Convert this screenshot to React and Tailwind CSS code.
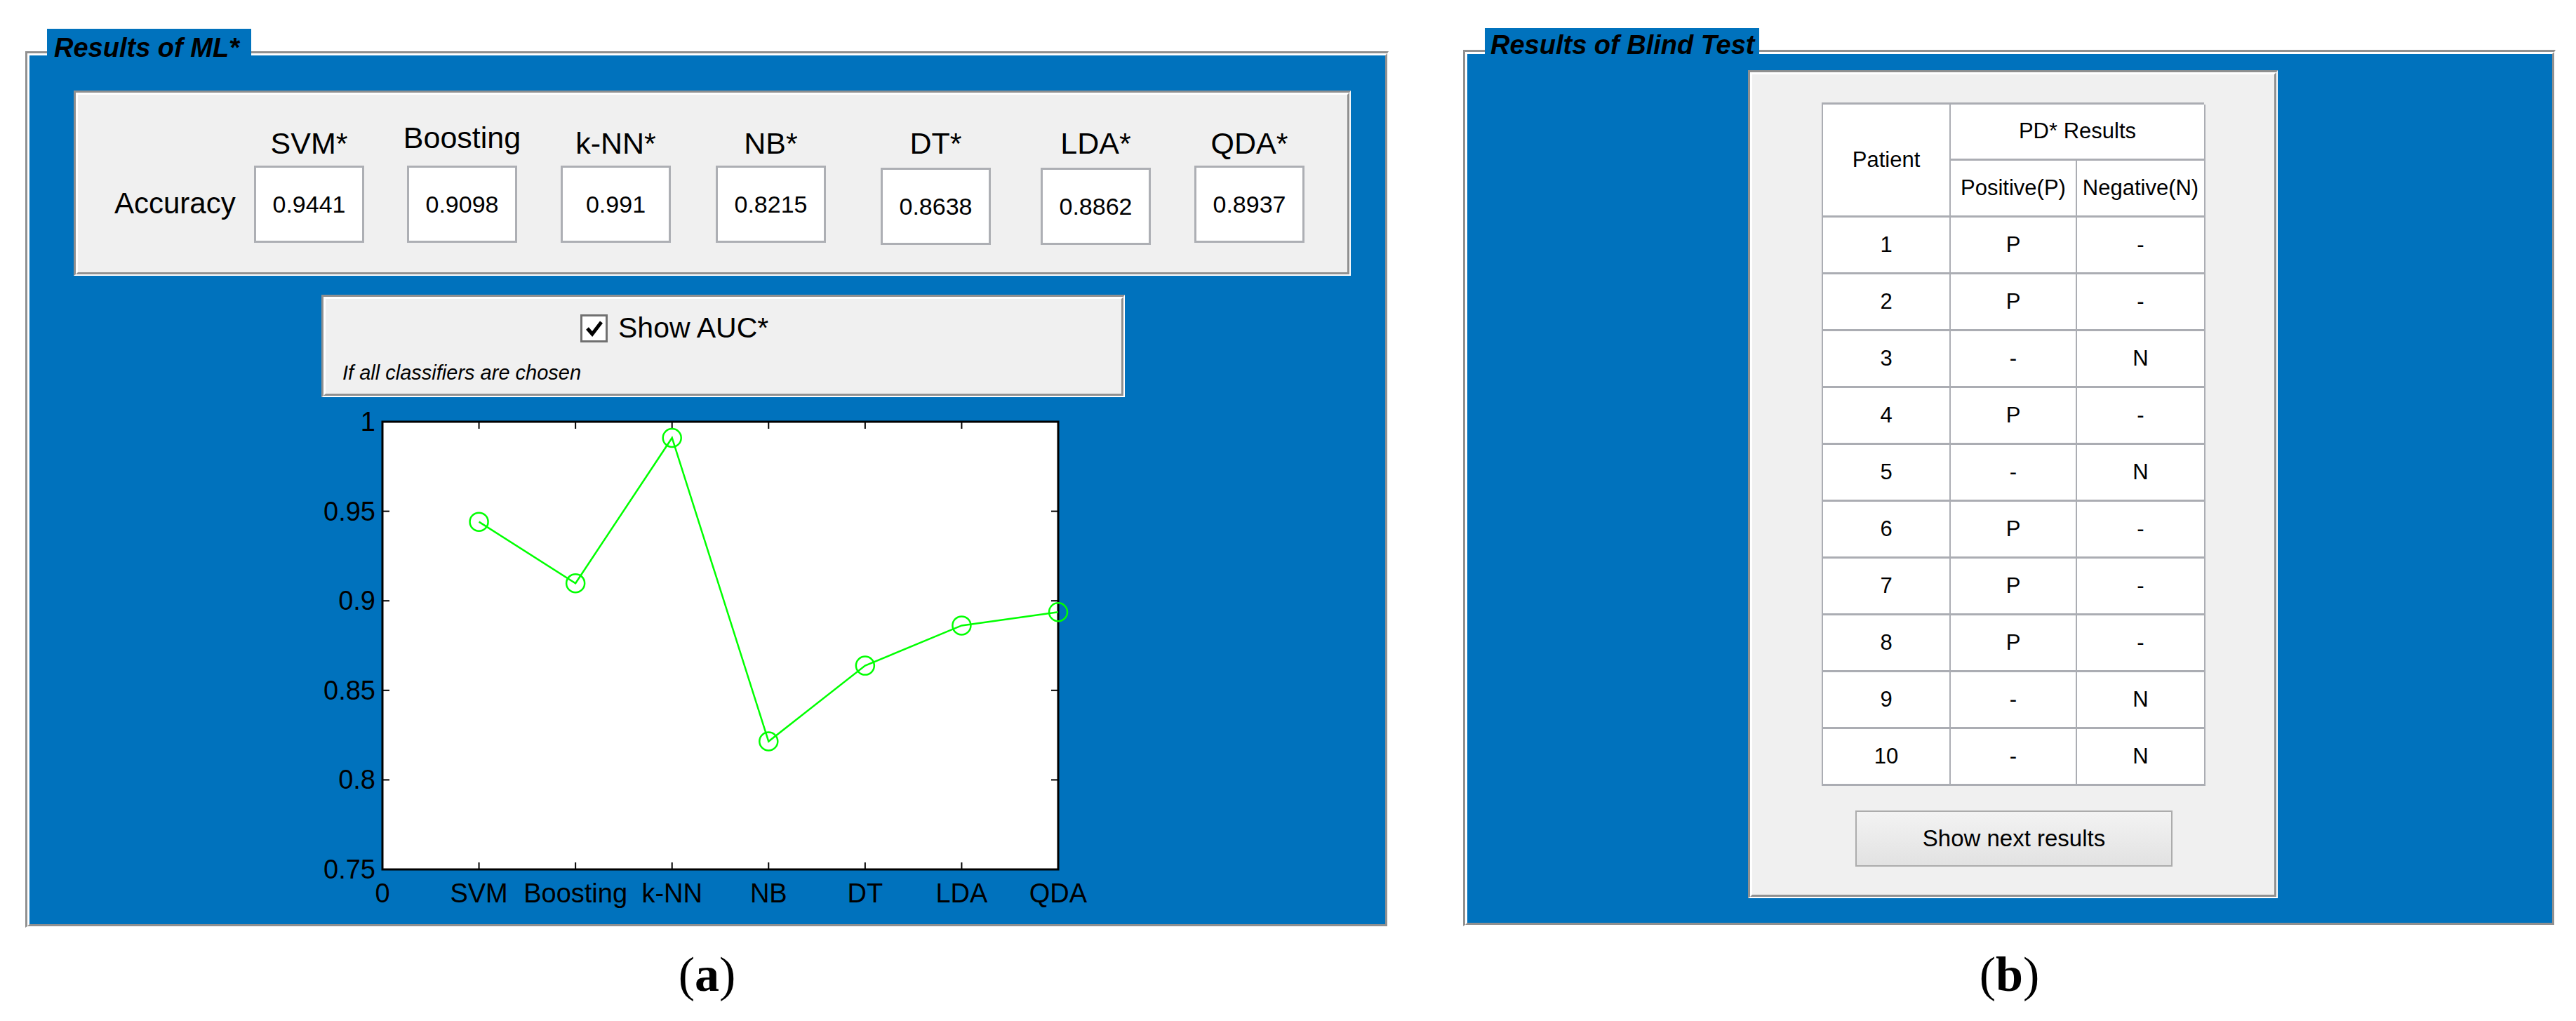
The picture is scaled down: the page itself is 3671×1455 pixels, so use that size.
import React from 'react';

const BLUE = 'bg-[#0072BD]';

const classifiers = [
  { label: 'SVM*', value: '0.9441', ml: 'ml-0' },
  { label: 'Boosting', value: '0.9098', ml: 'ml-[61px]', raise: true },
  { label: 'k-NN*', value: '0.991', ml: 'ml-[62px]' },
  { label: 'NB*', value: '0.8215', ml: 'ml-[64px]' },
  { label: 'DT*', value: '0.8638', ml: 'ml-[78px]', low: true },
  { label: 'LDA*', value: '0.8862', ml: 'ml-[71px]', low: true },
  { label: 'QDA*', value: '0.8937', ml: 'ml-[62px]' },
];

const blind = [
  ['1', 'P', '-'],
  ['2', 'P', '-'],
  ['3', '-', 'N'],
  ['4', 'P', '-'],
  ['5', '-', 'N'],
  ['6', 'P', '-'],
  ['7', 'P', '-'],
  ['8', 'P', '-'],
  ['9', '-', 'N'],
  ['10', '-', 'N'],
];

const auc = [0.9441, 0.9098, 0.991, 0.8215, 0.8638, 0.8862, 0.8937];
const xTicks = ['0', 'SVM', 'Boosting', 'k-NN', 'NB', 'DT', 'LDA', 'QDA'];
const yTicks = [1, 0.95, 0.9, 0.85, 0.8, 0.75];

// etched-in border, the way a matlab uipanel draws it
function Etched({ className = '', innerClassName = '', children }) {
  return (
    <div className={`border-t-[3px] border-l-[3px] border-r-2 border-b-2 border-t-[#909090] border-l-[#909090] border-r-white border-b-white ${className}`}>
      <div className={`h-full border-[3px] border-t-white border-l-white border-r-[#909090] border-b-[#909090] ${innerClassName}`}>
        {children}
      </div>
    </div>
  );
}

function Chart() {
  const left = 545, right = 1508, top = 601, bottom = 1239;
  const x = (i) => left + (i * (right - left)) / 7;
  const y = (v) => bottom - ((v - 0.75) / 0.25) * (bottom - top);
  const pts = auc.map((v, i) => `${x(i + 1)},${y(v)}`).join(' ');

  return (
    <svg width="1160" height="725" viewBox="440 575 1160 725" className="block">
      <rect x={left} y={top} width={right - left} height={bottom - top} fill="#fff" stroke="#000" strokeWidth="3" />
      {xTicks.map((t, i) => (
        <g key={t}>
          {i > 0 && i < 7 && (
            <>
              <line x1={x(i)} y1={top} x2={x(i)} y2={top + 10} stroke="#000" strokeWidth="2" />
              <line x1={x(i)} y1={bottom} x2={x(i)} y2={bottom - 10} stroke="#000" strokeWidth="2" />
            </>
          )}
          <text x={x(i)} y={1286} textAnchor="middle" fontSize="38" fontFamily="Liberation Sans, Arial, sans-serif">
            {t}
          </text>
        </g>
      ))}
      {yTicks.map((v) => (
        <g key={v}>
          {v < 1 && v > 0.75 && (
            <>
              <line x1={left} y1={y(v)} x2={left + 10} y2={y(v)} stroke="#000" strokeWidth="2" />
              <line x1={right} y1={y(v)} x2={right - 10} y2={y(v)} stroke="#000" strokeWidth="2" />
            </>
          )}
          <text x={535} y={y(v) + 13} textAnchor="end" fontSize="38" fontFamily="Liberation Sans, Arial, sans-serif">
            {v}
          </text>
        </g>
      ))}
      <polyline points={pts} fill="none" stroke="#00ff00" strokeWidth="2.5" />
      {auc.map((v, i) => (
        <circle key={i} cx={x(i + 1)} cy={y(v)} r="13" fill="none" stroke="#00ff00" strokeWidth="2.5" />
      ))}
    </svg>
  );
}

function PanelTitle({ children, className }) {
  return (
    <div className={`absolute h-[48px] overflow-hidden ${BLUE} ${className}`}>
      <div className="text-[38px] leading-none font-bold italic text-black whitespace-nowrap">{children}</div>
    </div>
  );
}

function ResultsML() {
  return (
    <div className="relative">
      <PanelTitle className="left-[31px] -top-[32px] w-[291px] pl-[10px] pt-[8px]">Results of ML*</PanelTitle>
      <Etched className="w-[1943px] h-[1249px]" innerClassName={`${BLUE} flex flex-col items-start`}>
        {/* accuracy table */}
        <Etched className="ml-[63px] mt-[50px] w-[1820px] h-[264px]" innerClassName="bg-[#f0f0f0] flex items-start pt-[48px]">
          <div className="ml-[52px] mt-[86px] w-[199px] text-[42px] leading-none text-black">Accuracy</div>
          {classifiers.map((c) => (
            <div key={c.label} className={`flex flex-col items-center w-[157px] ${c.ml}`}>
              <div className="h-[53px]">
                <div className={`text-[43px] leading-none text-black whitespace-nowrap ${c.raise ? '-mt-[8px]' : ''}`}>{c.label}</div>
              </div>
              <div className={`w-[157px] h-[110px] bg-white border-[3px] border-[#adafb4] flex items-center justify-center text-[34px] text-black ${c.low ? 'mt-[3px]' : ''}`}>
                {c.value}
              </div>
            </div>
          ))}
        </Etched>

        {/* show AUC */}
        <Etched className="ml-[416px] mt-[27px] w-[1145px] h-[146px]" innerClassName="bg-[#f0f0f0] flex flex-col items-start">
          <div className="ml-[363px] mt-[21px] flex items-center">
            <div className="w-[39px] h-[40px] bg-white border-[3px] border-[#707070] flex items-center justify-center">
              <svg width="26" height="26" viewBox="0 0 26 26">
                <path d="M3 13 L10 21 L23 4" fill="none" stroke="#000" strokeWidth="5" strokeLinejoin="miter" />
              </svg>
            </div>
            <span className="ml-[15px] text-[41px] leading-none text-black">Show AUC*</span>
          </div>
          <div className="ml-[24px] mt-[29px] text-[29px] leading-none italic text-black">If all classifiers are chosen</div>
        </Etched>

        <div className="ml-[398px] mt-[9px]">
          <Chart />
        </div>
      </Etched>
    </div>
  );
}

function BlindTest() {
  const cell = 'border-r-2 border-b-[3px] border-[#abadb3] flex items-center justify-center text-[31px] text-black';
  return (
    <div className="relative">
      <PanelTitle className="left-[31px] -top-[31px] w-[391px] pl-[8px] pt-[5px]">Results of Blind Test</PanelTitle>
      <Etched className="w-[1557px] h-[1249px]" innerClassName={`${BLUE} flex flex-col items-start`}>
        <Etched className="ml-[400px] mt-[23px] w-[755px] h-[1180px]" innerClassName="bg-[#f0f0f0] flex flex-col items-start">
          <div className="ml-[99px] mt-[40px] w-[545px] grid grid-cols-[182px_180px_183px] grid-rows-[80px_81px_repeat(10,81px)] bg-white border-t-[3px] border-l-2 border-[#abadb3]">
            <div className={`${cell} row-span-2`}>Patient</div>
            <div className={`${cell} col-span-2`}>PD* Results</div>
            <div className={cell}>Positive(P)</div>
            <div className={`${cell} whitespace-nowrap`}>Negative(N)</div>
            {blind.map((r) => r.map((v, j) => (
              <div key={r[0] + '-' + j} className={cell}>{v}</div>
            )))}
          </div>
          <button
            type="button"
            className="ml-[147px] mt-[35px] w-[452px] h-[80px] border-2 border-[#acacac] bg-gradient-to-b from-[#f3f3f3] to-[#e2e2e2] text-[33px] text-black"
          >
            Show next results
          </button>
        </Etched>
      </Etched>
    </div>
  );
}

export default function App() {
  return (
    <div className="w-[3671px] h-[1455px] bg-white flex items-start pl-[36px] pt-[71px] font-['Liberation_Sans',Arial,sans-serif] overflow-hidden">
      <div className="flex flex-col items-center mt-[2px]">
        <ResultsML />
        <div className="mt-[32px] text-[70px] leading-none text-black font-['Liberation_Serif','Times_New_Roman',serif]">
          (<span className="font-bold">a</span>)
        </div>
      </div>
      <div className="flex flex-col items-center ml-[106px]">
        <BlindTest />
        <div className="mt-[34px] text-[70px] leading-none text-black font-['Liberation_Serif','Times_New_Roman',serif]">
          (<span className="font-bold">b</span>)
        </div>
      </div>
    </div>
  );
}
